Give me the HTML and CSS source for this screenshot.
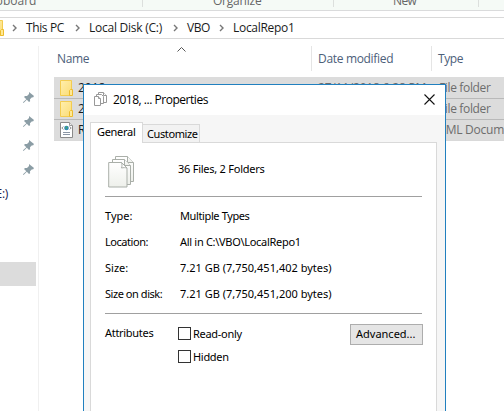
FILE: index.html
```html
<!DOCTYPE html>
<html lang="en">
<head>
<meta charset="utf-8">
<title>LocalRepo1</title>
<link rel="stylesheet" href="styles.css">
</head>
<body>
<svg class="defs" width="0" height="0">
  <defs>
    <linearGradient id="fold" x2="1" y2="1"><stop stop-color="#ffefad"/><stop offset="1" stop-color="#fbdc76"/></linearGradient>
    <linearGradient id="paper" x2="0" y2="1"><stop stop-color="#fff"/><stop offset="1" stop-color="#eef0eb"/></linearGradient>
    <symbol id="folder" viewBox="0 0 13 16"><path d="M.5.5h11v15H.5z" fill="url(#fold)" stroke="#f3cc50"/><path d="M10.5 9.5h2v6h-3v-5z" fill="#ffe995" stroke="#edbc2e"/></symbol>
    <symbol id="pin" viewBox="0 0 11 11"><path d="M6 0l5 4-1 1.4-1-.2-2 2 .1 2L6 10 3.8 7.8.8 10.8 0 11l.3-.9 3-2.8L1 5l1-1 2 .1 2-2z" fill="#8b9da5"/></symbol>
    <symbol id="chev" viewBox="0 0 5 8"><path d="M1 1l3 3-3 3" fill="none" stroke="#777" stroke-width="1.4"/></symbol>
  </defs>
</svg>
<div class="explorer">
  <div class="ribbon"><span class="clip">Clipboard</span><i class="sep1"></i><span class="org">Organize</span><i class="sep2"></i><span class="new">New</span><i class="sep3"></i></div>
  <div class="address">
    <svg class="root" width="13" height="16"><use href="#folder"/></svg>
    <svg class="chev" width="5" height="8"><use href="#chev"/></svg><span class="c1">This PC</span>
    <svg class="chev" width="5" height="8"><use href="#chev"/></svg><span class="c2">Local Disk (C:)</span>
    <svg class="chev" width="5" height="8"><use href="#chev"/></svg><span class="c3">VBO</span>
    <svg class="chev" width="5" height="8"><use href="#chev"/></svg><span class="c4">LocalRepo1</span>
  </div>
  <div class="main">
    <div class="nav">
      <div class="pins">
        <svg width="11" height="11"><use href="#pin"/></svg><svg width="11" height="11"><use href="#pin"/></svg><svg width="11" height="11"><use href="#pin"/></svg><svg width="11" height="11"><use href="#pin"/></svg>
      </div>
      <div class="drive">(E:)</div>
      <div class="picked"></div>
    </div>
    <div class="files">
      <div class="heads">
        <span class="name">Name</span><svg class="sort" width="9" height="5" viewBox="0 0 9 5"><path d="M.5 4.5l4-4 4 4" fill="none" stroke="#555"/></svg>
        <span class="date">Date modified</span><span class="type">Type</span>
      </div>
      <div class="row"><svg class="ico" width="13" height="16"><use href="#folder"/></svg><span class="fname">2018</span><span class="fdate">27/11/2018 6:28 PM</span><span class="ftype">File folder</span></div>
      <div class="row"><svg class="ico" width="13" height="16"><use href="#folder"/></svg><span class="fname">2019</span><span class="fdate">27/11/2018 6:28 PM</span><span class="ftype">File folder</span></div>
      <div class="row"><svg class="ico" width="13" height="16" viewBox="0 0 13 16"><path d="M.5.5h9l3 3v12H.5z" fill="#fff" stroke="#8a8a8a"/><path d="M9.500.5v3h3" fill="#eee" stroke="#999"/><circle cx="6.500" cy="6" r="2.300" fill="#3189b5"/><path d="M5.500 5l2-.8-.5 2-1 1z" fill="#48a965"/><path d="M3.300 4.500L1.800 6l1.500 1.500M9.700 4.500L11.200 6 9.700 7.500" fill="none" stroke="#666" stroke-width=".8"/><path d="M3 10.500h7M3 12.500h7" stroke="#8b96a5"/></svg><span class="fname">Repo</span><span class="fdate">27/11/2018 6:28 PM</span><span class="ftype xml">XML Document</span></div>
    </div>
  </div>
</div>
<div class="dialog">
  <div class="title">
    <svg width="13" height="14" viewBox="0 0 13 14" fill="#fff" stroke="#999"><path d="M4.500.5h5l3 3v7h-8z"/><path d="M9.500.5v3h3"/><path d="M2.500 2.500h5l2 2v7h-7z"/><path d="M.5 4.500h4l2 2v7h-6z"/><path d="M4.500 4.500v2h2"/></svg>
    <span>2018, ... Properties</span>
    <svg class="close" width="11" height="11" viewBox="0 0 11 11"><path d="M.5.5l10 10M10.500.5l-10 10" stroke="#111" stroke-width="1.100"/></svg>
  </div>
  <div class="tabs"><div class="tab on"><span>General</span></div><div class="tab off"><span>Customize</span></div></div>
  <div class="panel">
    <div class="summary">
      <svg width="27" height="32" viewBox="0 0 27 32" fill="url(#paper)" stroke="#aaafa9"><path d="M7.500.5h12l6 6v19h-18z"/><path d="M19.500.5v6h6"/><path d="M4.500 3.500h12l6 6v19h-18z"/><path d="M16.500 3.500v6h6"/><path d="M.7 6.500h12.800l5.500 5.500v19H.7z"/><path d="M13.500 6.500c.8 2 .5 3.500 0 5.500 2-.5 4-.5 5.500 0z" fill="#fff"/></svg>
      <span>36 Files, 2 Folders</span>
    </div>
    <div class="facts">
      <div><label class="k1">Type:</label><span class="v1">Multiple Types</span></div>
      <div><label class="k2">Location:</label><span class="v2">All in C:\VBO\LocalRepo1</span></div>
      <div><label class="k3">Size:</label><span class="v3">7.21 GB (7,750,451,402 bytes)</span></div>
      <div><label class="k4">Size on disk:</label><span class="v3">7.21 GB (7,750,451,200 bytes)</span></div>
    </div>
    <div class="attrs">
      <span class="alabel">Attributes</span>
      <div class="checks"><div><i></i><span class="ro">Read-only</span></div><div><i></i><span class="hid">Hidden</span></div></div>
      <div class="button"><span>Advanced...</span></div>
    </div>
  </div>
</div>
</body>
</html>
```
FILE: styles.css
```css
* { box-sizing: border-box; }
body { margin: 0; width: 504px; height: 411px; overflow: hidden; background: #fff; position: relative; font: 12px/16px "Open Sans", "Noto Sans", sans-serif; color: #1b1b1b; white-space: nowrap; }
svg { display: block; flex: none; overflow: visible; }
.defs { position: absolute; }
span { flex: none; }
.explorer { height: 411px; overflow: hidden; }
.ribbon { height: 11px; background: #f5faf6; border-bottom: 1px solid #dadbdc; display: flex; overflow: hidden; color: #666; }
.ribbon span { margin-top: -7px; height: 16px; }
.clip { margin-left: -18px; width: 160px; }
.org { margin-left: 70px; width: 60px; letter-spacing: -.22px; }
.new { margin-left: 59px; width: 32px; letter-spacing: -.6px; }
.ribbon i { width: 1px; height: 7px; background: #dcdfdd; }
.sep2 { margin-left: 60px; }
.sep3 { margin-left: 53px; }
.address { margin-top: 6px; height: 22px; border: solid #d9d9d9; border-width: 1px 0; display: flex; align-items: center; }
.address span { margin: -1px 0 0 9px; }
.root { margin-left: -9px; margin-right: 8px; }
.c1 { width: 49px; letter-spacing: -.38px; }
.c2 { width: 84px; letter-spacing: -.2px; }
.c2 { letter-spacing: -.2px; }
.c3 { width: 32px; letter-spacing: -.5px; }
.c4 { letter-spacing: -.3px; }
.c2 { letter-spacing: -.25px; }
.main { display: flex; height: 372px; }
.nav { width: 39px; margin-top: 7px; border-right: 1px solid #f0f0f0; }
.pins { display: flex; flex-direction: column; gap: 13px; padding: 46px 0 0 23px; }
.drive { height: 16px; margin: 11px 0 0 -12px; width: 20px; text-align: right; letter-spacing: -.3px; color: #202050; }
.picked { width: 36px; height: 24px; margin-top: 60px; background: #dcdcdc; }
.files { flex: 1; padding: 7px 0 0 15px; min-width: 0; }
.heads { height: 31px; display: flex; color: #4c607a; line-height: 26px; }
.name { width: 123px; padding-left: 3px; letter-spacing: -.35px; }
.sort { margin-top: 1px; width: 9px; }
.date { margin-left: 125px; width: 120px; height: 25px; border-left: 1px solid #e5e5e5; padding-left: 6px; letter-spacing: -.32px; }
.type { width: 80px; height: 25px; border-left: 1px solid #e5e5e5; padding-left: 6px; letter-spacing: -.4px; }
.row { height: 21px; background: #dcdcdc; border-top: 1px solid #b9b9b9; display: flex; align-items: center; color: #6d6d6d; }
.heads + .row { border-top-color: #dcdcdc; }
.row:last-child { height: 22px; border-bottom: 1px solid #d9d9d9; }
.ico { margin-left: 6px; }
.fname { margin-left: 5px; width: 186px; color: #1b1b1b; }
.fdate { margin-left: 54px; width: 121px; letter-spacing: -.2px; }
.ftype { letter-spacing: -.35px; }
.xml { letter-spacing: -.25px; }
.dialog { position: absolute; left: 83px; top: 84px; width: 363px; height: 327px; border: 1px solid #2180bf; border-bottom: 0; background: #f6f6f6; }
.title { height: 30px; background: #fff; display: flex; align-items: center; padding: 0 10px 2px; color: #000; }
.title span { margin: 2px 0 0 6px; letter-spacing: -.47px; }
.close { margin-left: auto; }
.tabs { height: 27px; display: flex; padding: 6px 0 0 6px; font: 11px/14px "Noto Sans", sans-serif; color: #000; align-items: flex-end; position: relative; z-index: 1; }
.tab { border: 1px solid #d9d9d9; border-bottom: 0; }
.on { width: 53px; height: 21px; background: #fff; padding: 2px 0 0 6px; margin-bottom: -1px; letter-spacing: -.3px; }
.off { width: 57px; height: 18px; border-left: 0; background: #f2f2f2; padding: 2px 0 0 4px; letter-spacing: -.4px; }
.panel { margin: 0 8px 0 6px; width: 347px; height: 280px; background: #fff; border: 1px solid #d9d9d9; border-bottom: 0; padding-left: 14px; font: 11px/14px "Noto Sans", sans-serif; color: #000; }
.summary { width: 317px; height: 54px; border-bottom: 1px solid #a0a0a0; padding: 13px 0 0 3px; display: flex; }
.summary span { margin: 6px 0 0 43px; letter-spacing: -.25px; }
.facts { width: 317px; height: 117px; border-bottom: 1px solid #a0a0a0; padding-top: 12px; }
.facts > div { display: flex; height: 26px; }
.facts label { width: 75px; }
.k2, .k4 { letter-spacing: -.45px; }
.v1 { letter-spacing: -.38px; }
.v2 { letter-spacing: -.3px; }
.attrs { display: flex; width: 318px; padding-top: 10px; align-items: flex-start; }
.alabel { width: 73px; margin-top: 2px; letter-spacing: -.3px; }
.checks > div { display: flex; height: 23px; padding-top: 3px; }
.checks i { width: 13px; height: 13px; border: 1px solid #333; margin-right: 2px; }
.ro, .hid { letter-spacing: -.3px; }
.button { margin-left: auto; width: 73px; height: 21px; background: #e5e5e5; border: 1px solid #adadad; padding: 2px 0 0 5px; }
```
